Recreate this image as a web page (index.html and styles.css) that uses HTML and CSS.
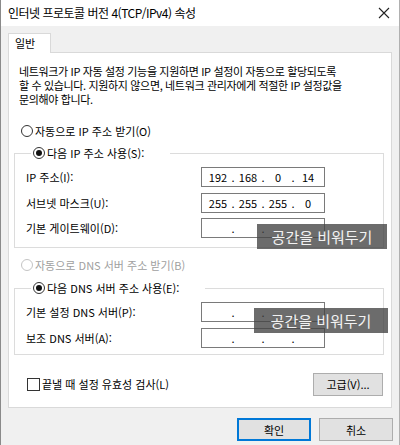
FILE: index.html
```html
<!DOCTYPE html>
<html lang="ko">
<head>
<meta charset="utf-8">
<link rel="stylesheet" href="styles.css">
</head>
<body>
<div class="window">
  <div class="titlebar">
    <span class="title">인터넷 프로토콜 버전 4(TCP/IPv4) 속성</span>
    <svg class="close" width="12" height="12" viewBox="0 0 12 12"><path d="M1 1L11 11M11 1L1 11" stroke="#222" stroke-width="1.1" fill="none"/></svg>
  </div>
  <div class="tabs"><div class="tab">일반</div></div>
  <div class="panel">
    <p class="desc">네트워크가 IP 자동 설정 기능을 지원하면 IP 설정이 자동으로 할당되도록<br>할 수 있습니다. 지원하지 않으면, 네트워크 관리자에게 적절한 IP 설정값을<br>문의해야 합니다.</p>
    <div class="radio radio-top"><span class="circle"></span><span>자동으로 IP 주소 받기(O)</span></div>
    <fieldset class="group">
      <legend class="radio"><span class="circle checked"></span><span>다음 IP 주소 사용(S):</span></legend>
      <div class="rows">
        <div class="row"><span class="lbl">IP 주소(I):</span><div class="ip"><span class="seg">192</span><span class="dot">.</span><span class="seg">168</span><span class="dot">.</span><span class="seg">0</span><span class="dot">.</span><span class="seg">14</span></div></div>
        <div class="row"><span class="lbl">서브넷 마스크(U):</span><div class="ip"><span class="seg">255</span><span class="dot">.</span><span class="seg">255</span><span class="dot">.</span><span class="seg">255</span><span class="dot">.</span><span class="seg">0</span></div></div>
        <div class="row"><span class="lbl">기본 게이트웨이(D):</span><div class="ip"><span class="seg"></span><span class="dot">.</span><span class="seg"></span><span class="dot">.</span><span class="seg"></span><span class="dot">.</span><span class="seg"></span></div><div class="hint hint-1">공간을 비워두기</div></div>
      </div>
    </fieldset>
    <div class="radio radio-disabled"><span class="circle"></span><span>자동으로 DNS 서버 주소 받기(B)</span></div>
    <fieldset class="group group-dns">
      <legend class="radio"><span class="circle checked"></span><span>다음 DNS 서버 주소 사용(E):</span></legend>
      <div class="rows">
        <div class="row"><span class="lbl">기본 설정 DNS 서버(P):</span><div class="ip"><span class="seg"></span><span class="dot">.</span><span class="seg"></span><span class="dot">.</span><span class="seg"></span><span class="dot">.</span><span class="seg"></span></div><div class="hint hint-2">공간을 비워두기</div></div>
        <div class="row"><span class="lbl">보조 DNS 서버(A):</span><div class="ip"><span class="seg"></span><span class="dot">.</span><span class="seg"></span><span class="dot">.</span><span class="seg"></span><span class="dot">.</span><span class="seg"></span></div></div>
      </div>
    </fieldset>
    <div class="bottom-row">
      <div class="check"><span class="box"></span><span>끝낼 때 설정 유효성 검사(L)</span></div>
      <button class="btn">고급(V)...</button>
    </div>
  </div>
  <div class="footer">
    <button class="btn btn-default">확인</button>
    <button class="btn">취소</button>
  </div>
</div>
</body>
</html>
```
FILE: styles.css
```css
* { box-sizing: border-box; }
html, body { margin: 0; padding: 0; }
body {
  width: 400px;
  height: 445px;
  overflow: hidden;
  font-family: "Noto Sans CJK KR", "Noto Sans", sans-serif;
  font-size: 11px;
  color: #000;
  background: #f0f0f0;
}
.window {
  width: 400px;
  height: 445px;
  background: #f0f0f0;
  border-left: 1px solid #8a8a8a;
  border-right: 1px solid #b0b0b0;
}
.titlebar {
  height: 26px;
  background: #fff;
  display: flex;
  align-items: center;
  justify-content: space-between;
  padding: 0 9px 0 7px;
}
.title { font-size: 12px; letter-spacing: -0.5px; line-height: 26px; }
.close { display: block; }
.tabs {
  padding: 7px 0 0 7px;
  display: flex;
}
.tab {
  width: 43px;
  height: 20px;
  background: #fff;
  border: 1px solid #d9d9d9;
  border-bottom: none;
  padding-left: 6px;
  line-height: 19px;
  margin-bottom: -1px;
  position: relative;
  z-index: 1;
}
.panel {
  margin: 0 7px;
  height: 356px;
  background: #fff;
  border: 1px solid #d9d9d9;
  padding: 0 7px 0 5px;
}
.desc {
  margin: 11px 0 0 5px;
  line-height: 14px;
  letter-spacing: -0.35px;
  white-space: nowrap;
}
.radio {
  display: flex;
  align-items: center;
  height: 16px;
  line-height: 16px;
  white-space: nowrap;
}
.circle {
  width: 12px;
  height: 12px;
  border: 1px solid #333;
  border-radius: 50%;
  margin-right: 2px;
  position: relative;
  flex: none;
}
.circle.checked::after {
  content: "";
  position: absolute;
  left: 2px; top: 2px;
  width: 6px; height: 6px;
  border-radius: 50%;
  background: #111;
}
.radio-top { margin: 17px 0 0 7px; }
.radio-disabled { margin: 9px 0 0 7px; color: #a0a0a0; }
.radio-disabled .circle { border-color: #c4c4c4; }
.group {
  margin: 6px 0 0 0;
  padding: 0 0 9px 11px;
  border: 1px solid #dcdcdc;
  min-width: 0;
}
.group-dns { margin-top: 7px; padding-bottom: 6px; }
.group legend {
  margin-left: 5px;
  padding: 0 26px 0 2px;
}
.rows {
  padding-top: 6px;
  display: flex;
  flex-direction: column;
  gap: 5.5px;
}
.row {
  display: flex;
  align-items: center;
  height: 20px;
  position: relative;
}
.lbl { width: 175px; flex: none; white-space: nowrap; }
.ip {
  width: 124px;
  height: 20px;
  border: 1px solid #7a7a7a;
  display: flex;
  align-items: center;
  padding-left: 3px;
  line-height: 18px;
  font-size: 11px;
}
.seg { width: 26px; text-align: center; }
.dot { width: 4px; text-align: center; }
.hint {
  position: absolute;
  height: 25px;
  background: rgba(66, 66, 66, 0.78);
  color: #f2f2f2;
  font-size: 15px;
  line-height: 25px;
  text-align: center;
  z-index: 2;
  white-space: nowrap;
}
.hint-1 { left: 231px; top: 6px; width: 130px; }
.hint-2 { left: 228px; top: 6px; width: 134px; }
.bottom-row {
  display: flex;
  justify-content: space-between;
  align-items: center;
  margin: 18px 1px 0 13px;
}
.check { display: flex; align-items: center; white-space: nowrap; }
.box {
  width: 13px; height: 13px;
  border: 1px solid #333;
  margin-right: 2px;
}
.btn {
  font-family: inherit;
  font-size: 11px;
  width: 70px;
  height: 23px;
  background: #e1e1e1;
  border: 1px solid #adadad;
  padding: 0;
  color: #000;
}
.footer {
  display: flex;
  justify-content: flex-end;
  gap: 8px;
  padding: 10px 6px 0 0;
}
.footer .btn { width: 74px; }
.btn-default { border: 2px solid #0078d7; }
```
